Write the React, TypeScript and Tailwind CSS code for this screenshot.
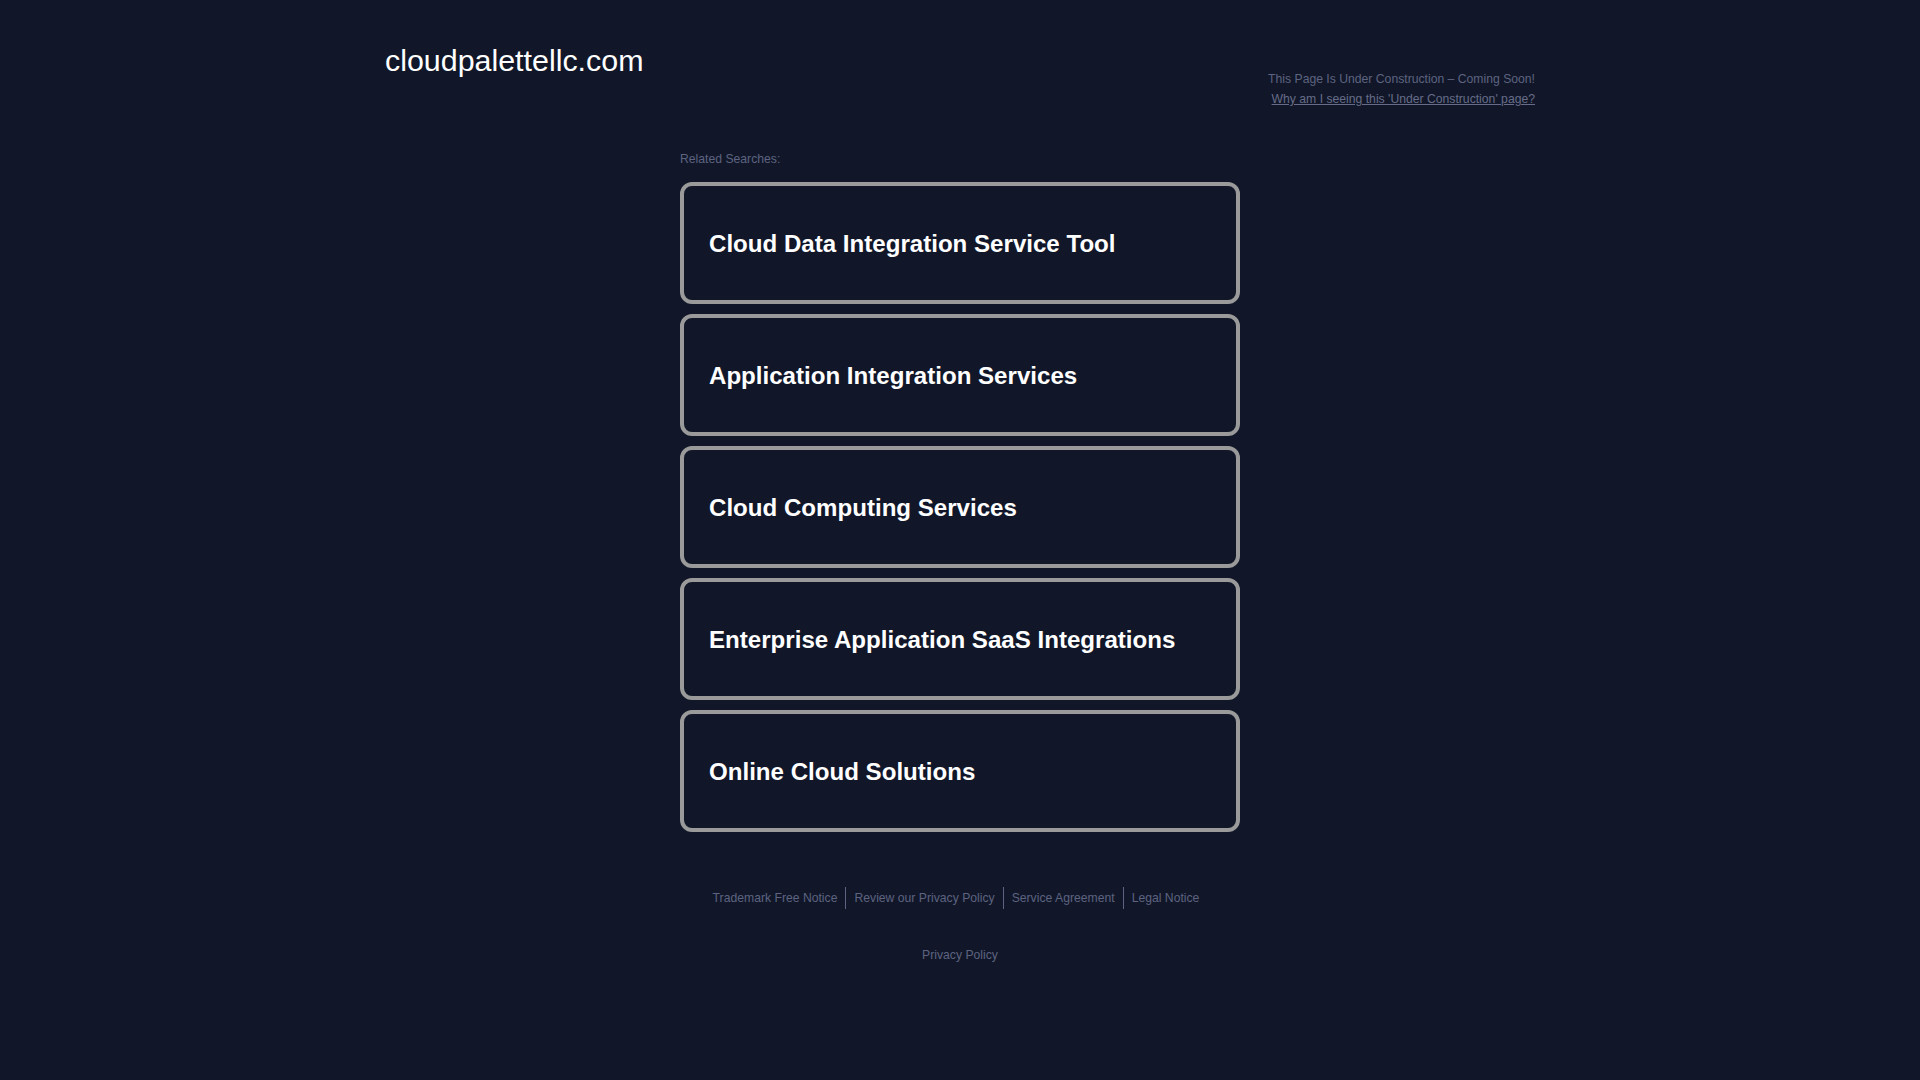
const searches = [
  'Cloud Data Integration Service Tool',
  'Application Integration Services',
  'Cloud Computing Services',
  'Enterprise Application SaaS Integrations',
  'Online Cloud Solutions',
]

const footerLinks = ['Trademark Free Notice', 'Review our Privacy Policy', 'Service Agreement', 'Legal Notice']

export default function App() {
  return (
    <div className="min-h-screen bg-[#111729] font-['Liberation_Sans',Arial,sans-serif]">
      {/* Header */}
      <div className="mx-auto flex w-[1150px] justify-between pt-[42px]">
        <div className="text-[30.4px] leading-[36px] text-white">cloudpalettellc.com</div>
        <div className="pt-[27px] text-right text-[12.2px] leading-[20px] text-[#5d6380]">
          <div>This Page Is Under Construction – Coming Soon!</div>
          <a href="#" className="text-[#666c88] underline">
            Why am I seeing this 'Under Construction' page?
          </a>
        </div>
      </div>

      {/* Related searches */}
      <div className="mx-auto mt-[42px] w-[560px]">
        <div className="text-[12.2px] leading-[16px] text-[#5d6380]">Related Searches:</div>
        <div className="mt-[15px] flex flex-col gap-[10px]">
          {searches.map((s) => (
            <a
              key={s}
              href="#"
              className="flex h-[122px] items-center rounded-[12px] border-4 border-[#9a9a9a] pl-[25px] pt-[2px] text-[24.1px] font-bold text-white"
            >
              {s}
            </a>
          ))}
        </div>
      </div>

      {/* Footer */}
      <div className="mt-[55px] flex justify-center pr-[8px]">
        {footerLinks.map((l, i) => (
          <a
            key={l}
            href="#"
            className={`px-[8px] text-[12.2px] leading-[22px] text-[#5d6380] ${i > 0 ? 'border-l border-[#5d6380]' : ''}`}
          >
            {l}
          </a>
        ))}
      </div>
      <div className="mt-[38px] flex justify-center">
        <a href="#" className="text-[12.2px] leading-[16px] text-[#5d6380]">
          Privacy Policy
        </a>
      </div>
    </div>
  )
}
